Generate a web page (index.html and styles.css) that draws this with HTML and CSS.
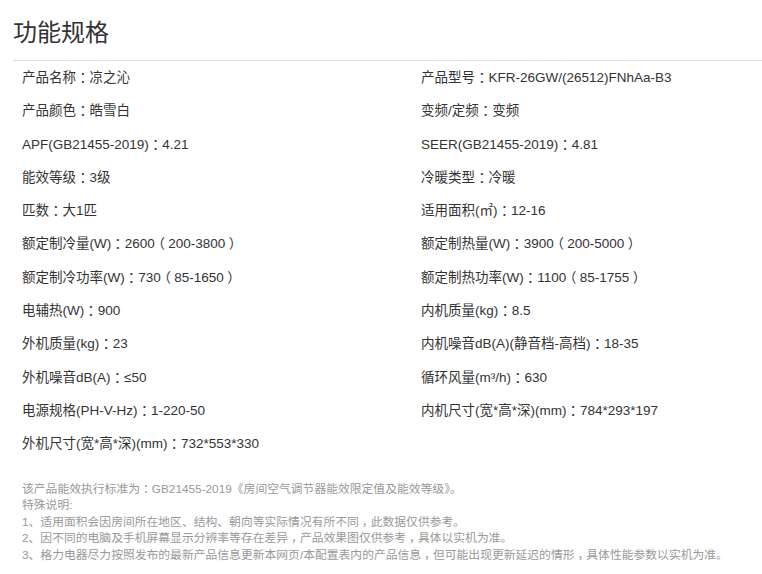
FILE: index.html
```html
<!DOCTYPE html>
<html lang="zh-CN">
<head>
<meta charset="utf-8">
<title>功能规格</title>
<link rel="stylesheet" href="styles.css">
</head>
<body>
<div class="spec">
  <h2 class="spec-title">功能规格</h2>
  <ul class="spec-list">
    <li>产品名称<span class="p">：</span>凉之沁</li>
    <li>产品型号<span class="p">：</span>KFR-26GW/(26512)FNhAa-B3</li>
    <li>产品颜色<span class="p">：</span>皓雪白</li>
    <li>变频/定频<span class="p">：</span>变频</li>
    <li>APF(GB21455-2019)<span class="p">：</span>4.21</li>
    <li>SEER(GB21455-2019)<span class="p">：</span>4.81</li>
    <li>能效等级<span class="p">：</span>3级</li>
    <li>冷暖类型<span class="p">：</span>冷暖</li>
    <li>匹数<span class="p">：</span>大1匹</li>
    <li>适用面积(㎡)<span class="p">：</span>12-16</li>
    <li>额定制冷量(W)<span class="p">：</span>2600<span class="p">（</span>200-3800<span class="p">）</span></li>
    <li>额定制热量(W)<span class="p">：</span>3900<span class="p">（</span>200-5000<span class="p">）</span></li>
    <li>额定制冷功率(W)<span class="p">：</span>730<span class="p">（</span>85-1650<span class="p">）</span></li>
    <li>额定制热功率(W)<span class="p">：</span>1100<span class="p">（</span>85-1755<span class="p">）</span></li>
    <li>电辅热(W)<span class="p">：</span>900</li>
    <li>内机质量(kg)<span class="p">：</span>8.5</li>
    <li>外机质量(kg)<span class="p">：</span>23</li>
    <li>内机噪音dB(A)(静音档-高档)<span class="p">：</span>18-35</li>
    <li>外机噪音dB(A)<span class="p">：</span>≤50</li>
    <li>循环风量(m³/h)<span class="p">：</span>630</li>
    <li>电源规格(PH-V-Hz)<span class="p">：</span>1-220-50</li>
    <li>内机尺寸(宽*高*深)(mm)<span class="p">：</span>784*293*197</li>
    <li>外机尺寸(宽*高*深)(mm)<span class="p">：</span>732*553*330</li>
  </ul>
  <div class="spec-note">
    <p>该产品能效执行标准为<span class="p">：</span>GB21455-2019《房间空气调节器能效限定值及能效等级》。</p>
    <p>特殊说明:</p>
    <p>1、适用面积会因房间所在地区、结构、朝向等实际情况有所不同<span class="p">，</span>此数据仅供参考。</p>
    <p>2、因不同的电脑及手机屏幕显示分辨率等存在差异<span class="p">，</span>产品效果图仅供参考<span class="p">，</span>具体以实机为准。</p>
    <p>3、格力电器尽力按照发布的最新产品信息更新本网页/本配置表内的产品信息<span class="p">，</span>但可能出现更新延迟的情形<span class="p">，</span>具体性能参数以实机为准。</p>
  </div>
</div>
</body>
</html>
```
FILE: styles.css
```css
html, body {
  margin: 0;
  padding: 0;
  background: #fff;
}
body {
  font-family: "Liberation Sans", "Noto Sans CJK SC", sans-serif;
  color: #333;
  overflow: hidden;
}
.p {
  display: inline-block;
  width: 1em;
  text-align: center;
  font-family: "Noto Sans CJK SC", sans-serif;
  font-feature-settings: "halt" 1;
  line-height: 1;
}
.spec {
  padding-left: 13px;
}
.spec-title {
  margin: 0;
  height: 61px;
  box-sizing: border-box;
  padding-top: 6px;
  line-height: 54px;
  font-size: 24px;
  font-weight: normal;
  color: #333;
  border-bottom: 1px solid #ddd;
}
.spec-list {
  list-style: none;
  margin: 0;
  padding: 0 0 0 9px;
  display: grid;
  grid-template-columns: 399px 1fr;
  grid-auto-rows: 33.3px;
  font-size: 13.5px;
  line-height: 33.3px;
  white-space: nowrap;
}
.spec-note {
  margin-top: 20px;
  padding-left: 9px;
  font-size: 11.8px;
  line-height: 16.5px;
  color: #999;
}
.spec-note p {
  margin: 0;
  white-space: nowrap;
}
```
